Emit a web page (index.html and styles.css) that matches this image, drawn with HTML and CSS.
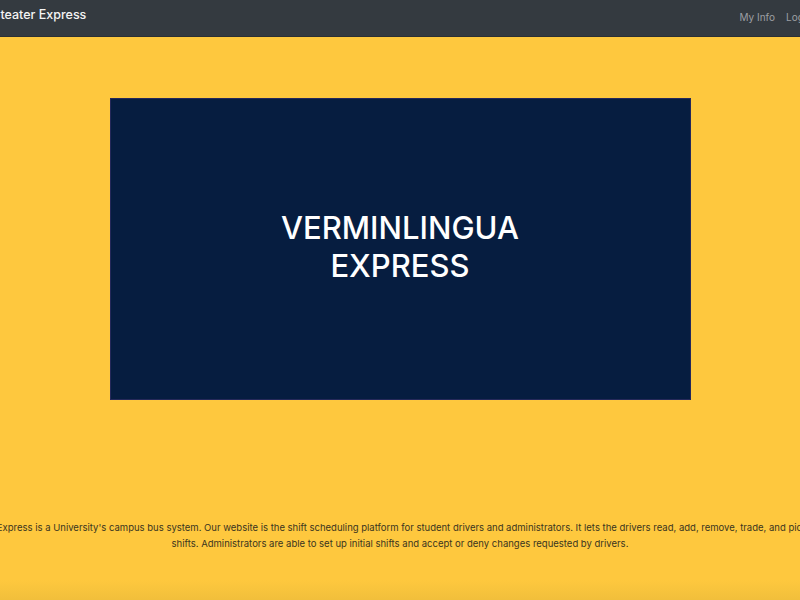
FILE: index.html
```html
<!DOCTYPE html>
<html lang="en">
<head>
<meta charset="utf-8">
<title>Anteater Express</title>
<link rel="stylesheet" href="styles.css">
</head>
<body>
<div class="page">
  <nav class="navbar">
    <span class="brand">Anteater Express</span>
    <ul class="nav-links">
      <li><a href="#">My Info</a></li>
      <li><a href="#">Logout</a></li>
    </ul>
  </nav>
  <main class="main">
    <section class="hero">
      <h1 class="hero-title">VERMINLINGUA<br>EXPRESS</h1>
    </section>
    <p class="about">Anteater Express is a University's campus bus system. Our website is the shift scheduling platform for student drivers and administrators. It lets the drivers read, add, remove, trade, and pick up their shifts. Administrators are able to set up initial shifts and accept or deny changes requested by drivers.</p>
  </main>
</div>
</body>
</html>
```

FILE: styles.css
```css
html, body {
  margin: 0;
  padding: 0;
  height: 100%;
  overflow: hidden;
  background: #fec83e;
  font-family: Inter, "Liberation Sans", sans-serif;
}

.page {
  width: 920px;
  margin-left: -60px;
  min-height: 600px;
  display: flex;
  flex-direction: column;
  background: linear-gradient(to bottom, #fec83e 0, #fec83e 580px, #f1bf3b 600px);
}

.navbar {
  height: 37px;
  box-sizing: border-box;
  background: #343a40;
  border-bottom: 1px solid #2b3035;
  display: flex;
  align-items: center;
  justify-content: space-between;
  padding: 0 41px 7px 44px;
}

.brand {
  color: #f4f4f4;
  font-size: 12.5px;
  font-weight: 500;
}

.nav-links {
  list-style: none;
  margin: 0;
  padding: 0;
  display: flex;
  gap: 11px;
}

.nav-links a {
  color: #9c9fa3;
  text-decoration: none;
  font-size: 10px;
}

.main {
  display: flex;
  flex-direction: column;
  align-items: center;
}

.hero {
  margin-top: 61px;
  width: 581px;
  height: 302px;
  box-sizing: border-box;
  background: #061d40;
  border: 1px solid #25295a;
  display: flex;
  align-items: center;
  justify-content: center;
}

.hero-title {
  margin: 0 0 4px;
  color: #ffffff;
  font-size: 31px;
  font-weight: 500;
  line-height: 38px;
  text-align: center;
}

.about {
  margin: 120px 0 0;
  width: 905px;
  text-align: center;
  color: #3a3520;
  font-size: 9.5px;
  line-height: 16px;
}
```
